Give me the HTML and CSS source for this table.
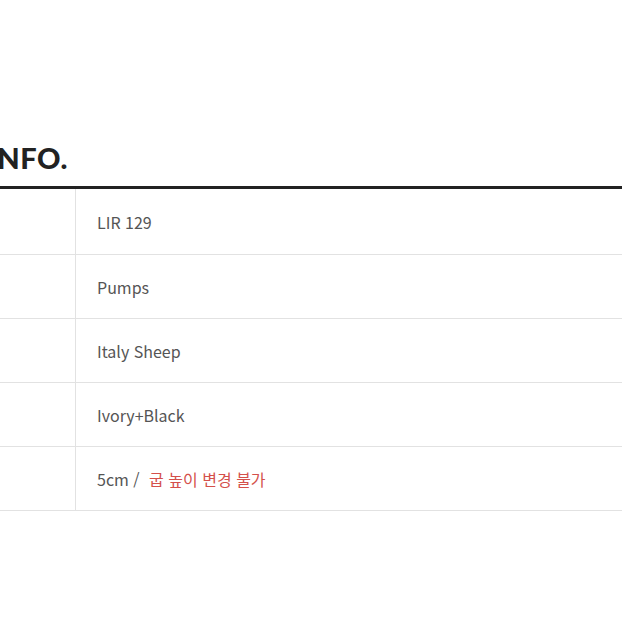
FILE: index.html
```html
<!DOCTYPE html>
<html lang="ko">
<head>
<meta charset="utf-8">
<link rel="stylesheet" href="styles.css">
</head>
<body>
<section class="info">
  <h2 class="title">INFO.</h2>
  <div class="table">
    <div class="row"><div class="label"></div><div class="value">LIR 129</div></div>
    <div class="row"><div class="label"></div><div class="value">Pumps</div></div>
    <div class="row"><div class="label"></div><div class="value">Italy Sheep</div></div>
    <div class="row"><div class="label"></div><div class="value">Ivory+Black</div></div>
    <div class="row"><div class="label"></div><div class="value">5cm / <span class="warn">굽 높이 변경 불가</span></div></div>
  </div>
</section>
</body>
</html>
```
FILE: styles.css
```css
html, body {
  margin: 0;
  padding: 0;
  background: #fff;
  overflow: hidden;
}
.info {
  margin-left: -12px;
  padding-top: 138px;
  font-family: "Noto Sans CJK KR", "Noto Sans", sans-serif;
}
.title {
  margin: 0;
  font-family: Lato, "Liberation Sans", sans-serif;
  font-weight: 900;
  font-size: 29px;
  line-height: 40px;
  color: #222;
  letter-spacing: 0.5px;
}
.table {
  margin-top: 8px;
  border-top: 3px solid #222;
}
.row {
  display: grid;
  grid-template-columns: 88px 1fr;
  height: 63px;
  border-bottom: 1px solid #e2e2e2;
}
.row:first-child {
  height: 65px;
}
.label {
  border-right: 1px solid #e2e2e2;
}
.value {
  display: flex;
  align-items: center;
  padding-left: 21px;
  font-size: 16px;
  font-weight: 400;
  color: #555;
  white-space: pre;
}
.warn {
  color: #d4504b;
  margin-left: 5px;
}
```
